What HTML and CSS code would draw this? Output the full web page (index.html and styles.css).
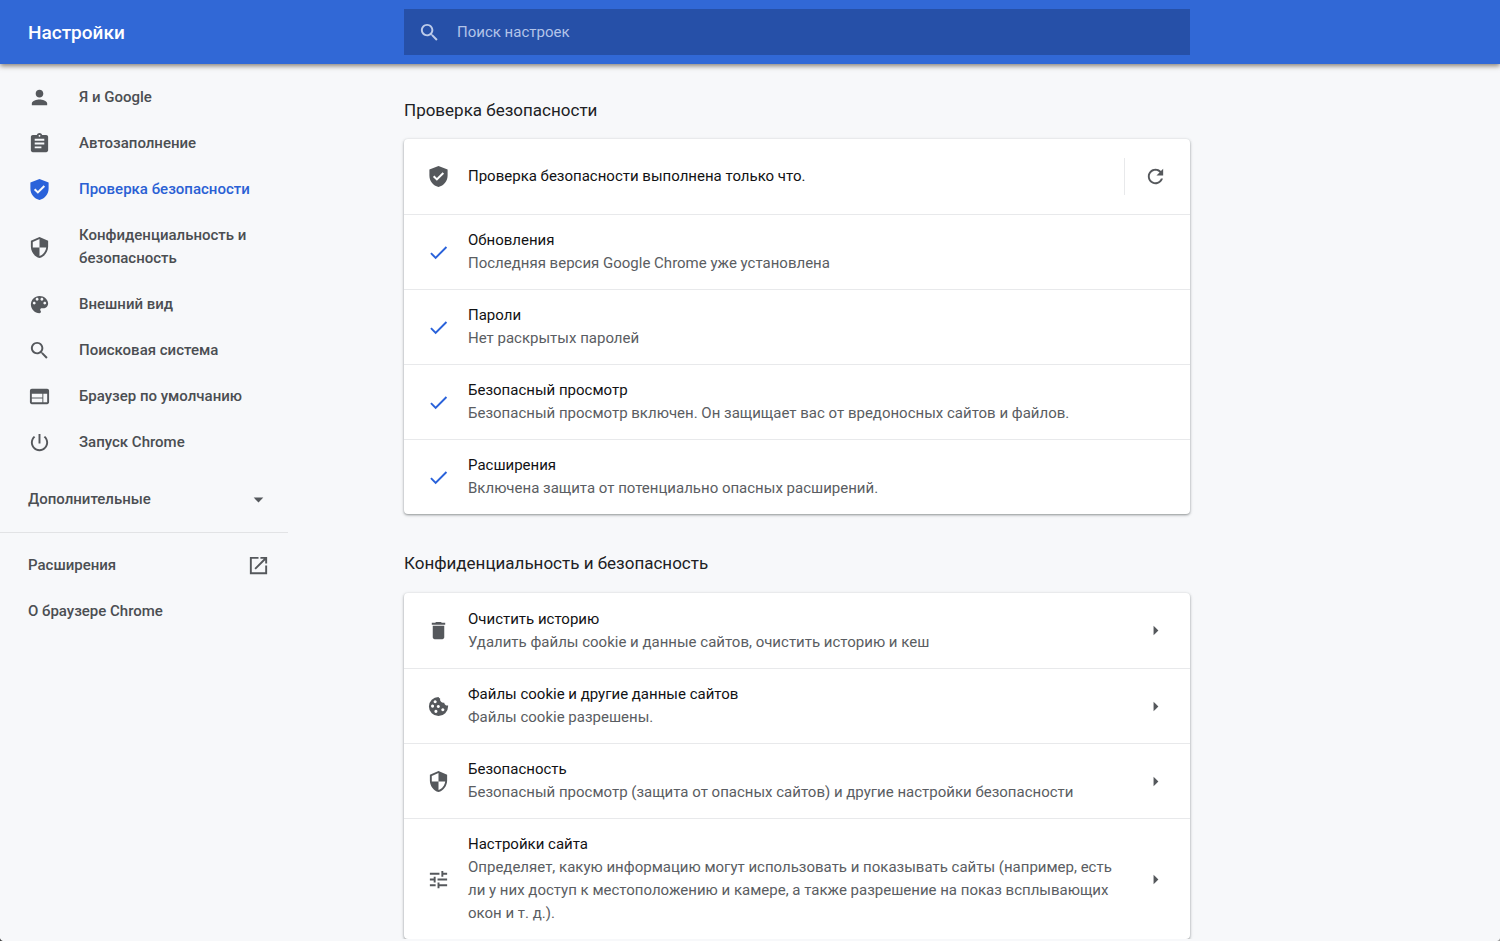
FILE: index.html
```html
<!DOCTYPE html>
<html lang="ru">
<head>
    <meta charset="UTF-8">
    <meta name="viewport" content="width=device-width, initial-scale=1.0">
    <title>Настройки</title>
    <link rel="stylesheet" href="styles.css">
</head>
<body>
    <header class="toolbar columns">
        <h1>Настройки</h1>
        <label class="search">
            <svg class="icon" viewBox="0 0 24 24"><path d="M15.5 14h-.79l-.28-.27C15.41 12.59 16 11.11 16 9.5 16 5.91 13.09 3 9.5 3S3 5.91 3 9.5 5.91 16 9.5 16c1.61 0 3.09-.59 4.23-1.57l.27.28v.79l5 4.99L20.49 19l-4.99-5zm-6 0C7.01 14 5 11.99 5 9.5S7.01 5 9.5 5 14 7.01 14 9.5 11.99 14 9.5 14z"/></svg>
            <input type="search" placeholder="Поиск настроек" aria-label="Поиск настроек">
        </label>
    </header>

    <div class="columns">
        <nav class="menu">
            <a href="#people">
                <svg class="icon" viewBox="0 0 24 24"><path d="M12 12c2.21 0 4-1.79 4-4s-1.79-4-4-4-4 1.79-4 4 1.79 4 4 4zm0 2c-2.67 0-8 1.34-8 4v2h16v-2c0-2.66-5.33-4-8-4z"/></svg>
                <span>Я и Google</span>
            </a>
            <a href="#autofill">
                <svg class="icon" viewBox="0 0 24 24"><path d="M19 3h-4.18C14.4 1.84 13.3 1 12 1s-2.4.84-2.82 2H5c-1.1 0-2 .9-2 2v14c0 1.1.9 2 2 2h14c1.1 0 2-.9 2-2V5c0-1.1-.9-2-2-2zm-7 0c.55 0 1 .45 1 1s-.45 1-1 1-1-.45-1-1 .45-1 1-1zm2 14H7v-2h7v2zm3-4H7v-2h10v2zm0-4H7V7h10v2z"/></svg>
                <span>Автозаполнение</span>
            </a>
            <a href="#safety" class="selected">
                <svg class="icon" viewBox="0 0 24 24"><path d="M12 1L2.5 4.6V11c0 5.7 3.9 10.7 9.5 12 5.6-1.3 9.5-6.3 9.5-12V4.6L12 1zm-1.7 15.5l-4.1-4.1 1.5-1.5 2.6 2.6 6-6 1.5 1.5-7.5 7.5z"/></svg>
                <span>Проверка безопасности</span>
            </a>
            <a href="#privacy">
                <svg class="icon" viewBox="0 0 24 24"><path d="M12 1L3 5v6c0 5.55 3.84 10.74 9 12 5.16-1.26 9-6.45 9-12V5l-9-4zm0 10.99h7c-.53 4.12-3.28 7.79-7 8.94V12H5V6.3l7-3.11v8.8z"/></svg>
                <span>Конфиденциальность и безопасность</span>
            </a>
            <a href="#appearance">
                <svg class="icon" viewBox="0 0 24 24"><path d="M12 3c4.97 0 9 3.6 9 8 0 2.76-2.24 5-5 5h-1.77c-.83 0-1.5.67-1.5 1.5 0 .39.15.74.39 1.01.23.26.38.61.38.99 0 .83-.67 1.5-1.5 1.5-4.97 0-9-4.03-9-9s4.03-9 9-9zM6.5 12c.83 0 1.5-.67 1.5-1.5S7.33 9 6.5 9 5 9.67 5 10.5 5.67 12 6.5 12zm3-4c.83 0 1.5-.67 1.5-1.5S10.33 5 9.5 5 8 5.67 8 6.5 8.67 8 9.5 8zm5 0c.83 0 1.5-.67 1.5-1.5S15.33 5 14.5 5 13 5.67 13 6.5 13.67 8 14.5 8zm3 4c.83 0 1.5-.67 1.5-1.5S18.33 9 17.5 9s-1.5.67-1.5 1.5.67 1.5 1.5 1.5z"/></svg>
                <span>Внешний вид</span>
            </a>
            <a href="#search">
                <svg class="icon" viewBox="0 0 24 24"><path d="M15.5 14h-.79l-.28-.27C15.41 12.59 16 11.11 16 9.5 16 5.91 13.09 3 9.5 3S3 5.91 3 9.5 5.91 16 9.5 16c1.61 0 3.09-.59 4.23-1.57l.27.28v.79l5 4.99L20.49 19l-4.99-5zm-6 0C7.01 14 5 11.99 5 9.5S7.01 5 9.5 5 14 7.01 14 9.5 11.99 14 9.5 14z"/></svg>
                <span>Поисковая система</span>
            </a>
            <a href="#default-browser">
                <svg class="icon" viewBox="0 0 24 24"><path d="M20 4H4c-1.1 0-1.99.9-1.99 2L2 18c0 1.1.9 2 2 2h16c1.1 0 2-.9 2-2V6c0-1.1-.9-2-2-2zm-5 14H4v-4h11v4zm0-5H4V9h11v4zm5 5h-4V9h4v9z"/></svg>
                <span>Браузер по умолчанию</span>
            </a>
            <a href="#on-startup">
                <svg class="icon" viewBox="0 0 24 24"><path d="M13 3h-2v10h2V3zm4.83 2.17l-1.42 1.42C17.99 7.86 19 9.81 19 12c0 3.87-3.13 7-7 7s-7-3.13-7-7c0-2.19 1.01-4.14 2.58-5.42L6.17 5.17C4.23 6.82 3 9.26 3 12c0 4.97 4.03 9 9 9s9-4.03 9-9c0-2.74-1.23-5.18-3.17-6.83z"/></svg>
                <span>Запуск Chrome</span>
            </a>
            <button type="button" class="advanced">
                <span>Дополнительные</span>
                <svg class="icon" viewBox="0 0 24 24"><path d="M7 10l5 5 5-5z"/></svg>
            </button>
            <hr>
            <a href="#extensions" class="spread">
                <span>Расширения</span>
                <svg class="icon" viewBox="0 0 24 24"><path d="M19 19H5V5h7V3H3v18h18v-9h-2v7zM14 3v2h3.59l-9.83 9.83 1.41 1.41L19 6.41V10h2V3h-7z"/></svg>
            </a>
            <a href="#about">
                <span>О браузере Chrome</span>
            </a>
        </nav>

        <main>
            <section>
                <h2>Проверка безопасности</h2>
                <div class="card">
                    <div class="row">
                        <svg class="icon" viewBox="0 0 24 24"><path d="M12 1L2.5 4.6V11c0 5.7 3.9 10.7 9.5 12 5.6-1.3 9.5-6.3 9.5-12V4.6L12 1zm-1.7 15.5l-4.1-4.1 1.5-1.5 2.6 2.6 6-6 1.5 1.5-7.5 7.5z"/></svg>
                        <div class="text">
                            <h3>Проверка безопасности выполнена только что.</h3>
                        </div>
                        <div class="action divided">
                            <button type="button" aria-label="Проверить ещё раз">
                                <svg class="icon" viewBox="0 0 24 24"><path d="M17.65 6.35C16.2 4.9 14.21 4 12 4c-4.42 0-7.99 3.58-7.99 8s3.57 8 7.99 8c3.73 0 6.84-2.55 7.73-6h-2.08c-.82 2.33-3.04 4-5.65 4-3.31 0-6-2.69-6-6s2.69-6 6-6c1.66 0 3.14.69 4.22 1.78L13 11h7V4l-2.35 2.35z"/></svg>
                            </button>
                        </div>
                    </div>
                    <div class="row">
                        <svg class="icon check" viewBox="0 0 24 24"><path d="M9 16.17L4.83 12l-1.42 1.41L9 19 21 7l-1.41-1.41z"/></svg>
                        <div class="text">
                            <h3>Обновления</h3>
                            <p>Последняя версия Google Chrome уже установлена</p>
                        </div>
                    </div>
                    <div class="row">
                        <svg class="icon check" viewBox="0 0 24 24"><path d="M9 16.17L4.83 12l-1.42 1.41L9 19 21 7l-1.41-1.41z"/></svg>
                        <div class="text">
                            <h3>Пароли</h3>
                            <p>Нет раскрытых паролей</p>
                        </div>
                    </div>
                    <div class="row">
                        <svg class="icon check" viewBox="0 0 24 24"><path d="M9 16.17L4.83 12l-1.42 1.41L9 19 21 7l-1.41-1.41z"/></svg>
                        <div class="text">
                            <h3>Безопасный просмотр</h3>
                            <p>Безопасный просмотр включен. Он защищает вас от вредоносных сайтов и файлов.</p>
                        </div>
                    </div>
                    <div class="row">
                        <svg class="icon check" viewBox="0 0 24 24"><path d="M9 16.17L4.83 12l-1.42 1.41L9 19 21 7l-1.41-1.41z"/></svg>
                        <div class="text">
                            <h3>Расширения</h3>
                            <p>Включена защита от потенциально опасных расширений.</p>
                        </div>
                    </div>
                </div>
            </section>

            <section>
                <h2>Конфиденциальность и безопасность</h2>
                <div class="card">
                    <div class="row">
                        <svg class="icon" viewBox="0 0 24 24"><path d="M6 19c0 1.1.9 2 2 2h8c1.1 0 2-.9 2-2V7H6v12zM19 4h-3.5l-1-1h-5l-1 1H5v2h14V4z"/></svg>
                        <div class="text">
                            <h3>Очистить историю</h3>
                            <p>Удалить файлы cookie и данные сайтов, очистить историю и кеш</p>
                        </div>
                        <div class="action">
                            <button type="button" aria-label="Очистить историю">
                                <svg class="icon" viewBox="0 0 24 24"><path d="M10 17l5-5-5-5z"/></svg>
                            </button>
                        </div>
                    </div>
                    <div class="row">
                        <svg class="icon" viewBox="0 0 24 24"><path fill-rule="evenodd" d="M12 2a10 10 0 1 0 10 10v-1.2a3 3 0 0 1-4-2.8 3.5 3.5 0 0 1-4.3-4.3A3 3 0 0 1 12 2zM8.5 5.5a1.6 1.6 0 1 0 .01 0zM5.8 10a1.6 1.6 0 1 0 .01 0zM11.8 10.4a1.6 1.6 0 1 0 .01 0zM9.3 15.5a1.6 1.6 0 1 0 .01 0zM16.5 13.8a1.6 1.6 0 1 0 .01 0z"/></svg>
                        <div class="text">
                            <h3>Файлы cookie и другие данные сайтов</h3>
                            <p>Файлы cookie разрешены.</p>
                        </div>
                        <div class="action">
                            <button type="button" aria-label="Файлы cookie и другие данные сайтов">
                                <svg class="icon" viewBox="0 0 24 24"><path d="M10 17l5-5-5-5z"/></svg>
                            </button>
                        </div>
                    </div>
                    <div class="row">
                        <svg class="icon" viewBox="0 0 24 24"><path d="M12 1L3 5v6c0 5.55 3.84 10.74 9 12 5.16-1.26 9-6.45 9-12V5l-9-4zm0 10.99h7c-.53 4.12-3.28 7.79-7 8.94V12H5V6.3l7-3.11v8.8z"/></svg>
                        <div class="text">
                            <h3>Безопасность</h3>
                            <p>Безопасный просмотр (защита от опасных сайтов) и другие настройки безопасности</p>
                        </div>
                        <div class="action">
                            <button type="button" aria-label="Безопасность">
                                <svg class="icon" viewBox="0 0 24 24"><path d="M10 17l5-5-5-5z"/></svg>
                            </button>
                        </div>
                    </div>
                    <div class="row">
                        <svg class="icon" viewBox="0 0 24 24"><path d="M3 17v2h6v-2H3zM3 5v2h10V5H3zm10 16v-2h8v-2h-8v-2h-2v6h2zM7 9v2H3v2h4v2h2V9H7zm14 4v-2H11v2h10zm-6-4h2V7h4V5h-4V3h-2v6z"/></svg>
                        <div class="text">
                            <h3>Настройки сайта</h3>
                            <p>Определяет, какую информацию могут использовать и показывать сайты (например, есть ли у них доступ к местоположению и камере, а также разрешение на показ всплывающих окон и т. д.).</p>
                        </div>
                        <div class="action">
                            <button type="button" aria-label="Настройки сайта">
                                <svg class="icon" viewBox="0 0 24 24"><path d="M10 17l5-5-5-5z"/></svg>
                            </button>
                        </div>
                    </div>
                </div>
            </section>
        </main>
    </div>
</body>
</html>
```
FILE: styles.css
```css
* {
    box-sizing: border-box;
}

body {
    margin: 0;
    background-color: #f7f8fa;
    color: #202124;
    font-family: Roboto, "Liberation Sans", sans-serif;
    font-size: 15px;
    line-height: 23px;
}

/* rounded corners of the window */
body::before,
body::after {
    content: "";
    position: fixed;
    bottom: 0;
    width: 5px;
    height: 5px;
}

body::before {
    left: 0;
    background: radial-gradient(circle at top right, transparent 5px, #444 6px);
}

body::after {
    right: 0;
    background: radial-gradient(circle at top left, transparent 5px, #999 6px);
}

h1, h2, h3, p {
    margin: 0;
    font-weight: 400;
}

button {
    padding: 0;
    border: 0;
    background: none;
    color: inherit;
    font: inherit;
    cursor: pointer;
}

.icon {
    flex: none;
    display: block;
    width: 23px;
    height: 23px;
    fill: #55585c;
}

/* menu | content | empty space */
.columns {
    display: grid;
    grid-template-columns: minmax(288px, 404fr) minmax(0, 786px) minmax(0, 310fr);
}

.toolbar {
    position: sticky;
    top: 0;
    z-index: 1;
    align-items: center;
    height: 64px;
    background-color: #3168d6;
    box-shadow: 0 2px 5px rgba(60, 45, 30, 0.6);
}

.toolbar h1 {
    padding-left: 28px;
    color: #fff;
    font-size: 19px;
    font-weight: 500;
}

.search {
    display: flex;
    align-items: center;
    gap: 16px;
    height: 46px;
    padding: 0 14px;
    background-color: #2650a8;
}

.search .icon {
    fill: #bccbea;
}

.search input {
    flex: 1;
    min-width: 0;
    padding: 0;
    border: 0;
    outline: none;
    background: none;
    color: #fff;
    font: inherit;
}

.search input::placeholder {
    color: #b3c4e8;
    opacity: 1;
}

.menu {
    width: 288px;
    padding-top: 10px;
    color: #4b4e52;
    font-weight: 500;
}

.menu a,
.advanced {
    display: flex;
    align-items: center;
    gap: 28px;
    width: 100%;
    padding: 12px 18px 11px 28px;
    color: inherit;
    text-decoration: none;
}

.menu .selected {
    color: #2a60d4;
}

.menu .selected .icon {
    fill: #2a62da;
}

.advanced {
    justify-content: space-between;
    margin: 11px 0 10px;
}

.menu .spread {
    justify-content: space-between;
}

.menu hr {
    margin: 0 0 9px;
    border: 0;
    border-top: 1px solid #e2e3e5;
}

section h2 {
    padding: 35px 0 17px;
    font-size: 17px;
}

section + section h2 {
    padding: 38px 0 18px;
}

.card {
    border-radius: 4px;
    background-color: #fff;
    box-shadow: 0 1px 2px rgba(60, 64, 67, 0.4), 0 1px 3px 1px rgba(60, 64, 67, 0.15);
}

.row {
    display: flex;
    align-items: center;
    min-height: 75px;
    padding: 14px 14px 14px 23px;
}

.row + .row {
    border-top: 1px solid #e8e9eb;
}

.text {
    flex: 1;
    padding-left: 18px;
}

.text h3 {
    color: #111214;
    font-size: 15px;
}

.text p {
    color: #5a5d62;
}

.check {
    fill: #2a62da;
}

.action {
    margin-left: 10px;
}

.divided {
    padding-left: 9px;
    border-left: 1px solid #e8e9eb;
}

.action button {
    display: flex;
    align-items: center;
    justify-content: center;
    width: 42px;
    height: 37px;
}
```
